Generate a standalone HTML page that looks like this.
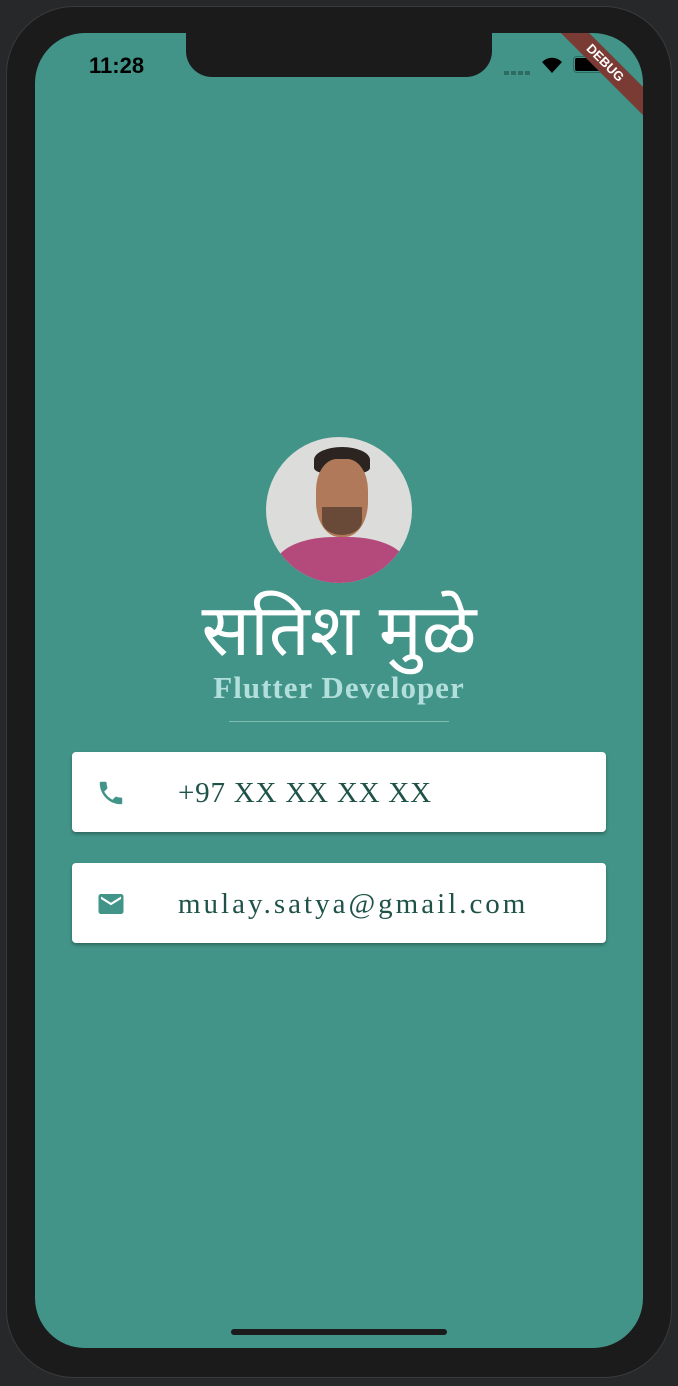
<!DOCTYPE html>
<html><head><meta charset="utf-8"><style>
html,body{margin:0;padding:0;width:678px;height:1386px;background:#27282a;overflow:hidden;font-family:"Liberation Serif",serif}
.frame{position:absolute;left:6px;top:6px;width:666px;height:1372px;background:#1b1b1b;border-radius:68px;border:1px solid #3a3a3c;box-sizing:border-box}
.screen{position:absolute;left:35px;top:33px;width:608px;height:1315px;background:#429488;border-radius:50px;overflow:hidden}
.notch{position:absolute;left:151px;top:0;width:306px;height:44px;background:#1b1b1b;border-radius:0 0 26px 26px}
.time{position:absolute;left:54px;top:20px;font:bold 22px "Liberation Sans",sans-serif;color:#000}
.card{position:absolute;left:37px;width:534px;height:80px;background:#fff;border-radius:4px;box-shadow:0 2px 3px rgba(0,0,0,.3)}
.card span{position:absolute;left:106px;top:25px;font-size:29px;color:#1f5248;letter-spacing:.8px}
.card svg{position:absolute;left:24px;top:26px}
.ribbon{position:absolute;right:-32px;top:20px;width:140px;height:20px;background:#7a3b34;transform:rotate(45deg);color:#fff;font:bold 13px "Liberation Sans",sans-serif;text-align:center;line-height:20px}
</style></head><body>
<div class="frame"></div>
<div class="screen">
<div class="notch"></div>
<div class="time">11:28</div>
<div style="position:absolute;left:469px;top:38px;width:28px;height:4px;background:repeating-linear-gradient(90deg,#2e6b61 0 5px,transparent 5px 7px)"></div>
<svg style="position:absolute;left:505px;top:22px" width="24" height="20" viewBox="0 0 24 20"><path d="M12 18 L2 7 A14 14 0 0 1 22 7 Z" fill="#000"/></svg>
<div style="position:absolute;left:538px;top:23px;width:30px;height:17px;border:1px solid #2e6b61;border-radius:4px;box-sizing:border-box;padding:1px"><div style="width:100%;height:100%;background:#000;border-radius:2px"></div></div>
<div class="ribbon">DEBUG</div>
<div style="position:absolute;left:231px;top:404px;width:146px;height:146px;border-radius:50%;background:#dcdcda;overflow:hidden">
<div style="position:absolute;left:48px;top:10px;width:56px;height:26px;background:#2b2420;border-radius:50% 50% 20% 20%"></div>
<div style="position:absolute;left:50px;top:22px;width:52px;height:78px;background:#b07a5a;border-radius:40% 40% 45% 45%"></div>
<div style="position:absolute;left:56px;top:70px;width:40px;height:28px;background:#3a2a22;border-radius:0 0 50% 50%;opacity:.6"></div>
<div style="position:absolute;left:10px;top:100px;width:130px;height:60px;background:#b44a7c;border-radius:45% 45% 0 0"></div></div>
<div style="position:absolute;left:0;width:608px;top:546px;text-align:center;color:#fff;font:normal 72px 'Liberation Sans',sans-serif">सतिश मुळे</div>
<div style="position:absolute;left:0;width:608px;top:637px;text-align:center;color:#b2dfdb;font-size:31px;font-weight:bold;letter-spacing:1px">Flutter Developer</div>
<div style="position:absolute;left:194px;top:688px;width:220px;height:1px;background:#7fbcb2"></div>
<div class="card" style="top:719px"><svg width="30" height="30" viewBox="0 0 24 24"><path fill="#429488" d="M6.6 10.8c1.4 2.8 3.8 5.1 6.6 6.6l2.2-2.2c.3-.3.7-.4 1-.2 1.1.4 2.300 .6 3.6.6.6 0 1 .4 1 1V20c0 .6-.4 1-1 1C10.6 21 3 13.4 3 4c0-.6.4-1 1-1h3.5c.6 0 1 .4 1 1 0 1.3.2 2.5.6 3.6.1.3 0 .7-.2 1L6.6 10.8z"/></svg><span>+97 XX XX XX XX</span></div>
<div class="card" style="top:830px"><svg width="30" height="30" viewBox="0 0 24 24"><path fill="#429488" d="M20 4H4c-1.1 0-2 .9-2 2v12c0 1.1.9 2 2 2h16c1.1 0 2-.9 2-2V6c0-1.1-.9-2-2-2zm0 4l-8 5-8-5V6l8 5 8-5v2z"/></svg><span style="letter-spacing:3px">mulay.satya@gmail.com</span></div>
<div style="position:absolute;left:196px;top:1296px;width:216px;height:6px;border-radius:3px;background:#1b1b1b"></div>
</div>
</body></html>
